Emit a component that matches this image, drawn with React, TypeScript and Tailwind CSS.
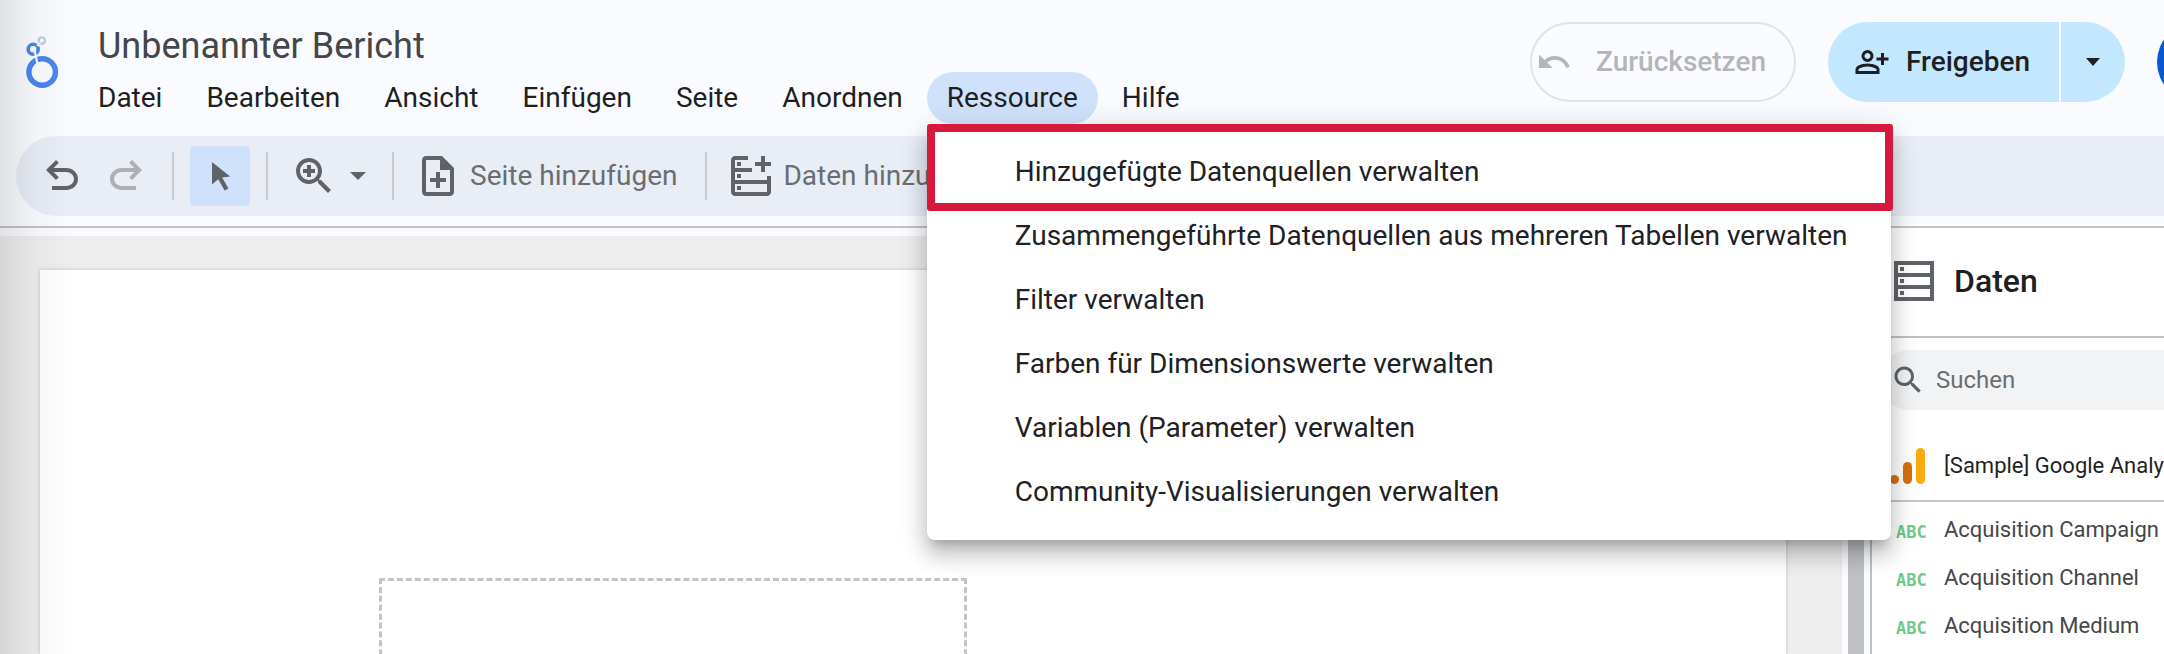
import { useState, type ReactNode } from 'react'

const menus = ['Datei', 'Bearbeiten', 'Ansicht', 'Einfügen', 'Seite', 'Anordnen', 'Ressource', 'Hilfe']

const resourceItems = [
  'Hinzugefügte Datenquellen verwalten',
  'Zusammengeführte Datenquellen aus mehreren Tabellen verwalten',
  'Filter verwalten',
  'Farben für Dimensionswerte verwalten',
  'Variablen (Parameter) verwalten',
  'Community-Visualisierungen verwalten',
]

const fields = ['Acquisition Campaign', 'Acquisition Channel', 'Acquisition Medium']

function Icon({ className = 'size-12', children }: { className?: string; children: ReactNode }) {
  return (
    <svg viewBox="0 0 24 24" fill="currentColor" aria-hidden="true" className={`shrink-0 ${className}`}>
      {children}
    </svg>
  )
}

function Logo() {
  return (
    <svg viewBox="22 34 40 56" fill="none" aria-hidden="true" className="mt-[34px] h-14 w-10 shrink-0">
      <circle cx="41.8" cy="40.6" r="3.2" stroke="#c0cfe3" strokeWidth="2.4" />
      <circle cx="33.2" cy="49.3" r="5" stroke="#4a86ee" strokeWidth="3.6" />
      <path d="M40 42.6 37.4 46" stroke="#f7f9fd" strokeWidth="2.6" />
      <circle cx="42.2" cy="72" r="13.3" stroke="#4a86ee" strokeWidth="5.4" />
      <path d="M34.8 51.5 37.4 63.5" stroke="#f7f9fd" strokeWidth="2.2" />
    </svg>
  )
}

function ResourceMenu() {
  return (
    <ul
      role="menu"
      className="absolute left-0 top-full z-20 w-[964px] rounded-lg bg-white py-4 shadow-[0_10px_10px_-6px_rgba(0,0,0,0.2),0_16px_20px_2px_rgba(0,0,0,0.14),0_6px_28px_4px_rgba(0,0,0,0.12)]"
    >
      {resourceItems.map((item) => (
        <li key={item} role="none">
          <button
            role="menuitem"
            className="flex h-16 w-full items-center whitespace-nowrap pl-[88px] text-left text-[#202124]"
          >
            {item}
          </button>
        </li>
      ))}
      {/* highlight around the first entry */}
      <li
        role="none"
        className="pointer-events-none absolute -right-0.5 left-0 top-0 h-[87px] rounded-[3px] border-8 border-[#d71a3b]"
      />
    </ul>
  )
}

function Header() {
  const [open, setOpen] = useState('Ressource')

  return (
    <header className="flex h-[136px] shrink-0 items-start pl-[22px]">
      <Logo />
      <div className="ml-4 pt-6">
        <h1 className="h-11 whitespace-nowrap pl-5 text-[36px] leading-[44px] text-[#444648]">
          Unbenannter Bericht
        </h1>
        <nav className="mt-1 flex gap-1">
          {menus.map((name) => (
            <div key={name} className="relative">
              <button
                onClick={() => setOpen(open === name ? '' : name)}
                className={`h-[52px] rounded-full px-5 text-[#1f1f1f] ${open === name ? 'bg-[#d0e2fb]' : ''}`}
              >
                {name}
              </button>
              {name === 'Ressource' && open === name && <ResourceMenu />}
            </div>
          ))}
        </nav>
      </div>

      <div className="ml-auto mt-[22px] flex h-20 items-center gap-8 font-medium">
        <button
          disabled
          className="flex h-20 w-[266px] items-center gap-6 rounded-full border-2 border-[#e2e3e5] pl-1 text-[#b4b5b7]"
        >
          <Icon className="size-9">
            <path d="M12.5 8c-2.65 0-5.05.99-6.9 2.6L2 7v9h9l-3.62-3.62c1.39-1.16 3.16-1.88 5.12-1.88 3.54 0 6.55 2.31 7.6 5.5l2.37-.78C21.08 11.03 17.15 8 12.5 8z" />
          </Icon>
          Zurücksetzen
        </button>
        <div className="flex h-20 gap-0.5 text-[#1f1f1f]">
          <button className="flex w-[231px] items-center gap-4 rounded-l-full bg-[#c2e7ff] pl-[26px]">
            <Icon className="size-9">
              <path d="M18 14v-3h-3V9h3V6h2v3h3v2h-3v3zm-9-2q-1.65 0-2.825-1.175T5 8t1.175-2.825T9 4t2.825 1.175T13 8t-1.175 2.825T9 12m-8 8v-2.8q0-.85.438-1.562T2.6 14.55q1.55-.775 3.15-1.162T9 13t3.25.388t3.15 1.162q.725.375 1.163 1.088T17 17.2V20zm2-2h12v-.8q0-.275-.137-.5t-.363-.35q-1.35-.675-2.725-1.012T9 15t-2.775.338T3.5 16.35q-.225.125-.363.35T3 17.2zm6-8q.825 0 1.413-.587T11 8t-.587-1.412T9 6t-1.412.588T7 8t.588 1.413T9 10" />
            </Icon>
            Freigeben
          </button>
          <button aria-label="Weitere Optionen" className="flex w-16 items-center justify-center rounded-r-full bg-[#c2e7ff]">
            <svg viewBox="0 0 14 8" fill="currentColor" aria-hidden="true" className="h-2 w-3.5">
              <path d="M0 0h14L7 8z" />
            </svg>
          </button>
        </div>
        <div className="w-[7px] overflow-hidden">
          <div className="size-20 rounded-full bg-[#0b57d0]" />
        </div>
      </div>
    </header>
  )
}

function Divider({ className }: { className: string }) {
  return <span className={`h-12 w-0.5 shrink-0 bg-[#c8cacd] ${className}`} />
}

function Toolbar() {
  return (
    <div className="ml-4 flex h-20 shrink-0 items-center whitespace-nowrap rounded-l-full bg-[#e8edf6] pl-[22px] text-[#5f6368]">
      <button aria-label="Rückgängig machen">
        <Icon>
          <path d="M7 19v-2h7.1q1.575 0 2.738-1T18 13.5T16.838 11T14.1 10H7.8l2.6 2.6L9 14L4 9l5-5l1.4 1.4L7.8 8h6.3q2.425 0 4.163 1.575T20 13.5t-1.737 3.925T14.1 19z" />
        </Icon>
      </button>
      <button aria-label="Wiederholen" disabled className="ml-4 text-[#adafb2]">
        <Icon className="size-12 -scale-x-100">
          <path d="M7 19v-2h7.1q1.575 0 2.738-1T18 13.5T16.838 11T14.1 10H7.8l2.6 2.6L9 14L4 9l5-5l1.4 1.4L7.8 8h6.3q2.425 0 4.163 1.575T20 13.5t-1.737 3.925T14.1 19z" />
        </Icon>
      </button>
      <Divider className="ml-[22px] mr-4" />
      <button aria-label="Auswahlmodus" className="flex size-[60px] items-center justify-center rounded bg-[#d0e2fb]">
        <Icon>
          <path d="M8 5v11.2l3.1-2.6 3.2 5.6 1.9-1-3.1-5.4 4-.5z" />
        </Icon>
      </button>
      <Divider className="ml-4 mr-[22px]" />
      <button aria-label="Zoom" className="flex items-center">
        <Icon>
          <path d="M15.5 14h-.79l-.28-.27C15.41 12.59 16 11.11 16 9.5 16 5.91 13.09 3 9.5 3S3 5.91 3 9.5 5.91 16 9.5 16c1.61 0 3.09-.59 4.23-1.57l.27.28v.79l5 4.99L20.49 19l-4.99-5zm-6 0C7.01 14 5 11.99 5 9.5S7.01 5 9.5 5 14 7.01 14 9.5 11.99 14 9.5 14z" />
          <path d="M8.5 6.5h2v2h2v2h-2v2h-2v-2h-2v-2h2z" />
        </Icon>
        <svg viewBox="0 0 16 8" fill="currentColor" aria-hidden="true" className="ml-3 h-2 w-4">
          <path d="M0 0h16L8 8z" />
        </svg>
      </button>
      <Divider className="ml-[26px] mr-5" />
      <button className="flex items-center gap-2 text-[#6a6d71]">
        <Icon className="size-12 text-[#5f6368]">
          <path d="M14 2H6c-1.1 0-2 .9-2 2v16c0 1.1.9 2 2 2h12c1.1 0 2-.9 2-2V8zm4 18H6V4h7v5h5z" />
          <path d="M11 10h2v3h3v2h-3v3h-2v-3H8v-2h3z" />
        </Icon>
        Seite hinzufügen
      </button>
      <Divider className="ml-7 mr-5" />
      <button className="flex items-center gap-2 text-[#6a6d71]">
        <Icon className="size-12 text-[#5f6368]">
          <path fillRule="evenodd" d="M4 2h6.5v2H4v4h8.500v2H4v4h16v-2h2v8c0 1.1-.9 2-2 2H4c-1.1 0-2-.9-2-2V4c0-1.1.9-2 2-2zM4 16v4h16v-4z" />
          <path d="M17 2h2v3h3v2h-3v3h-2V7h-3V5h3zM5 5h2v2H5zM5 11h2v2H5zM5 17h2v2H5z" />
        </Icon>
        Daten hinzufügen
      </button>
    </div>
  )
}

function DataPanel() {
  return (
    <aside className="w-[294px] shrink-0 overflow-hidden whitespace-nowrap border-l-2 border-[#bdbfc3] bg-white">
      <div className="flex h-[110px] items-center gap-5 border-b-2 border-[#bdbfc3] pb-0.5 pl-[22px]">
        <svg viewBox="0 0 40 40" fill="#5f6368" aria-hidden="true" className="size-10">
          <path fillRule="evenodd" d="M0 0h40v40H0zM4 4v8h32V4zM4 16v8h32v-8zM4 28v8h32v-8z" />
          <path d="M6 6h4v4H6zM6 18h4v4H6zM6 30h4v4H6z" />
        </svg>
        <h2 className="text-[32px] font-medium leading-10 text-[#1f1f1f]">Daten</h2>
      </div>

      <label className="ml-2 mt-3 flex h-[60px] items-center gap-2 rounded-l-full bg-[#f1f3f4] pl-[10px] text-[#5f6368]">
        <Icon className="size-9">
          <path d="M15.5 14h-.79l-.28-.27C15.41 12.59 16 11.11 16 9.5 16 5.91 13.09 3 9.5 3S3 5.91 3 9.5 5.91 16 9.5 16c1.61 0 3.09-.59 4.23-1.57l.27.28v.79l5 4.99L20.49 19l-4.99-5zm-6 0C7.01 14 5 11.99 5 9.5S7.01 5 9.5 5 14 7.01 14 9.5 11.99 14 9.5 14z" />
        </Icon>
        <input
          type="search"
          placeholder="Suchen"
          aria-label="Suchen"
          className="min-w-0 flex-1 bg-transparent pl-[2px] text-2xl outline-none placeholder:text-[#6b6e72]"
        />
      </label>

      <div className="flex h-[92px] items-center gap-[18px] border-b-2 border-[#c4c6ca] pl-[18px] pt-[22px] text-[22px] text-[#1f1f1f]">
        <svg viewBox="0 0 36 36" aria-hidden="true" className="size-9 shrink-0">
          <circle cx="4.5" cy="31.5" r="4.5" fill="#d9700b" />
          <rect x="13" y="14" width="9" height="22" rx="4.5" fill="#d9700b" />
          <rect x="26" y="0" width="9" height="36" rx="4.5" fill="#f9ab10" />
        </svg>
        [Sample] Google Analytics
      </div>

      <ul className="pt-1 text-[22px] text-[#444648]">
        {fields.map((field) => (
          <li key={field} className="flex h-12 items-center pl-6">
            <span className="w-12 pt-1 font-['DejaVu_Sans_Mono',monospace] text-[17px] font-bold text-[#6fcb88]">
              ABC
            </span>
            {field}
          </li>
        ))}
      </ul>
    </aside>
  )
}

export default function App() {
  return (
    <div className="relative flex h-screen flex-col overflow-hidden bg-[#f9fbff] font-['Roboto','Liberation_Sans',sans-serif] text-[28px] leading-8">
      <Header />
      <Toolbar />
      <main className="mt-2.5 flex min-h-0 flex-1 border-t-2 border-[#c1c3c8]">
        <section className="mt-2 flex-1 overflow-hidden bg-[#eeeeee] pl-10 pr-14 pt-[34px]">
          <div className="relative h-full bg-white shadow-[0_0_4px_rgba(0,0,0,0.2)]">
            <div className="absolute left-[339px] top-[308px] h-[300px] w-[588px] border-[3px] border-dashed border-[#c3c4c8]" />
          </div>
        </section>
        <div className="w-7 shrink-0 px-1.5">
          <div className="h-full w-4 bg-[#bfc1c6]" />
        </div>
        <DataPanel />
      </main>
      {/* soft shade along the window's left edge */}
      <div className="pointer-events-none absolute inset-y-0 left-0 w-[72px] bg-linear-to-r from-black/10 via-black/3 to-transparent" />
    </div>
  )
}
